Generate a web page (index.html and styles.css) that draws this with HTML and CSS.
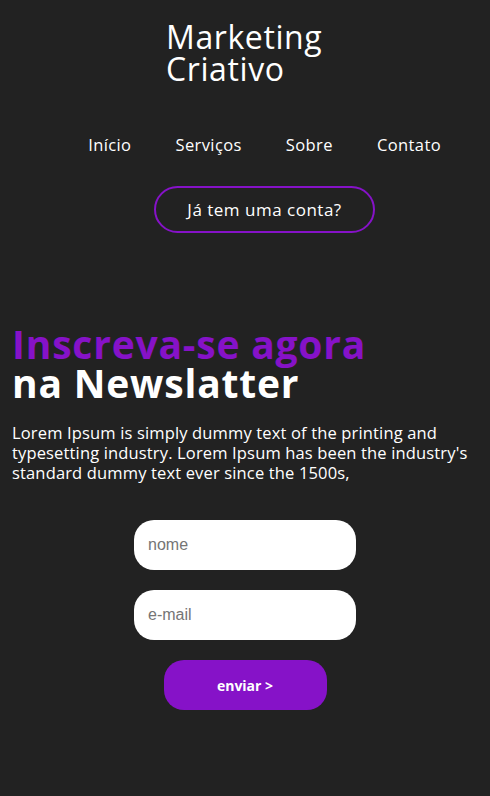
FILE: index.html
```html
<!DOCTYPE html>
<html lang="pt">
<head>
<meta charset="utf-8">
<title>Marketing Criativo</title>
<link rel="stylesheet" href="styles.css">
</head>
<body>
<header class="header">
  <h1 class="logo">Marketing<br>Criativo</h1>
  <nav class="nav">
    <a href="#" class="nav-link">Início</a>
    <a href="#" class="nav-link">Serviços</a>
    <a href="#" class="nav-link">Sobre</a>
    <a href="#" class="nav-link">Contato</a>
  </nav>
  <div class="account-wrap">
    <button class="account-btn">Já tem uma conta?</button>
  </div>
</header>
<main class="main">
  <h2 class="title"><span class="title-accent">Inscreva-se agora</span><br>na Newslatter</h2>
  <p class="lead">Lorem Ipsum is simply dummy text of the printing and typesetting industry. Lorem Ipsum has been the industry's standard dummy text ever since the 1500s,</p>
  <form class="form">
    <input class="field" type="text" placeholder="nome">
    <input class="field" type="email" placeholder="e-mail">
    <button type="button" class="send">enviar &gt;</button>
  </form>
</main>
</body>
</html>
```
FILE: styles.css
```css
* { box-sizing: border-box; }
html, body { margin: 0; padding: 0; }
body {
  background: #222222;
  color: #ffffff;
  font-family: "Open Sans", "DejaVu Sans", sans-serif;
  width: 490px;
  min-height: 796px;
}
.header { padding-top: 21px; }
.logo {
  width: 160px;
  margin: 0 0 0 166px;
  font-size: 32px;
  font-weight: 400;
  line-height: 32px;
  letter-spacing: 0.6px;
  white-space: nowrap;
}
.nav {
  display: flex;
  justify-content: flex-end;
  gap: 44px;
  padding-right: 49px;
  margin-top: 48px;
}
.nav-link {
  color: #ffffff;
  text-decoration: none;
  font-size: 16.5px;
  letter-spacing: 0.4px;
  line-height: 24px;
}
.account-wrap {
  display: flex;
  justify-content: center;
  margin-top: 29px;
  padding-left: 39px;
}
.account-btn {
  width: 221px;
  height: 47px;
  border: 2px solid #8612c8;
  border-radius: 24px;
  background: transparent;
  color: #ffffff;
  font-family: inherit;
  font-size: 17px;
  letter-spacing: 0.5px;
}
.main { padding: 91px 4px 0 12px; }
.title {
  margin: 0;
  font-size: 39px;
  font-weight: 700;
  line-height: 39px;
  letter-spacing: 0.8px;
}
.title-accent { color: #8612c8; }
.lead {
  margin: 21px 0 0;
  font-size: 16.5px;
  letter-spacing: 0.15px;
  line-height: 20px;
}
.form {
  display: flex;
  flex-direction: column;
  align-items: center;
  gap: 20px;
  margin-top: 37px;
  padding-right: 8px;
}
.field {
  width: 222px;
  height: 50px;
  border: none;
  border-radius: 20px;
  background: #ffffff;
  padding: 0 14px;
  font-family: "Liberation Sans", Arial, sans-serif;
  font-size: 16px;
  outline: none;
}
.field::placeholder { color: #757575; }
.send {
  width: 163px;
  height: 50px;
  border: none;
  border-radius: 20px;
  background: #8612c8;
  color: #ffffff;
  font-family: "Open Sans", sans-serif;
  font-weight: 700;
  font-size: 14px;
}
```
